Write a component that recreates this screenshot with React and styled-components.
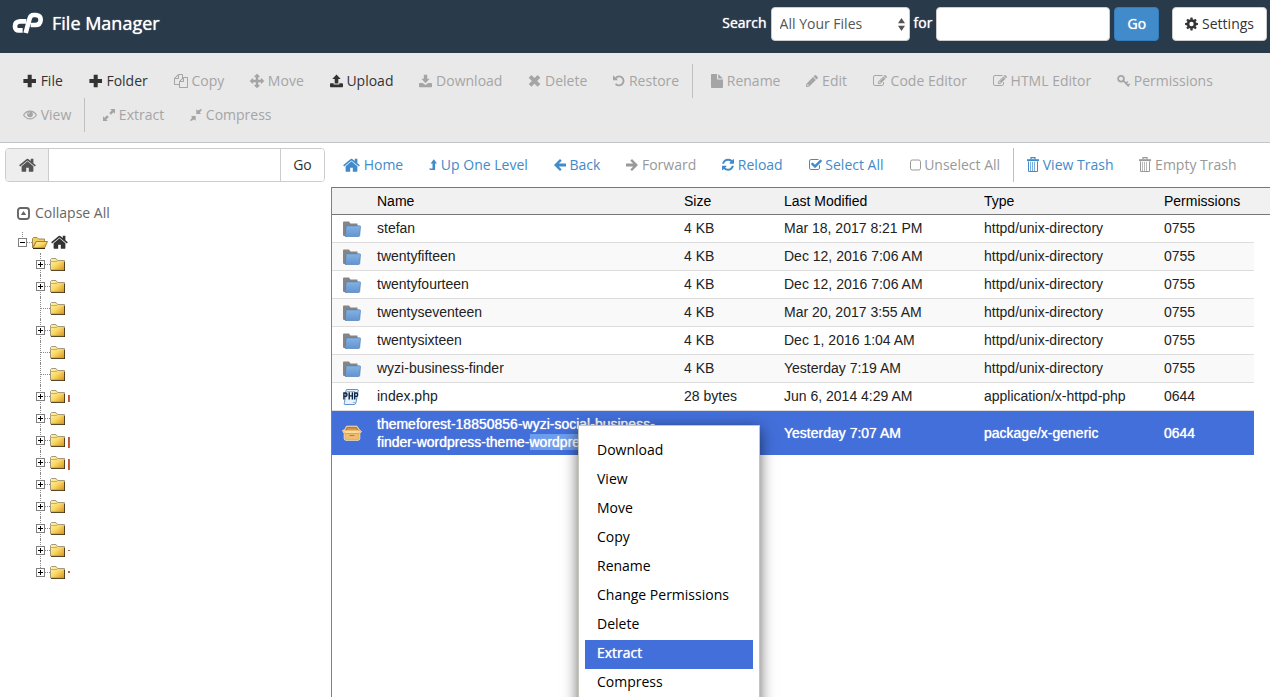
import React from "react";
import styled, { createGlobalStyle, css } from "styled-components";

const GlobalStyle = createGlobalStyle`
  *, *::before, *::after { box-sizing: border-box; }
  html, body { margin: 0; padding: 0; background: #fff; }
  body { font: 14px/20px "Open Sans", "Liberation Sans", sans-serif; color: #333; overflow: hidden; }
  button, input, select { font: inherit; color: inherit; margin: 0; }
`;

/* ---------- icons ---------- */

const Svg = styled.svg`
  display: block;
  flex: none;
  fill: currentColor;
  overflow: visible;
`;

const FA = "0 0 1792 1792";

const ICONS = {
  plus: { w: 14, h: 14, box: "0 0 14 14", art: <path d="M4.700.8h4v4.300h4.300v3.900H8.700v4.300h-4V9H.4V5.100h4.300z" /> },
  copy: { w: 14, h: 14, box: FA, art: <path d="M1696 384q40 0 68 28t28 68v1216q0 40-28 68t-68 28h-960q-40 0-68-28t-28-68v-288h-544q-40 0-68-28t-28-68v-672q0-40 20-88t48-76l408-408q28-28 76-48t88-20h416q40 0 68 28t28 68v328q68-40 128-40h416zm-544 213l-299 299h299v-299zm-640-384l-299 299h299v-299zm196 647l316-316v-416h-384v416q0 40-28 68t-68 28h-416v640h512v-256q0-40 20-88t48-76zm956 804v-1152h-384v416q0 40-28 68t-68 28h-416v640h896z" /> },
  move: { w: 14, h: 14, box: FA, art: <path d="M1792 896q0 26-19 45l-256 256q-19 19-45 19t-45-19-19-45v-128h-384v384h128q26 0 45 19t19 45-19 45l-256 256q-19 19-45 19t-45-19l-256-256q-19-19-19-45t19-45 45-19h128v-384h-384v128q0 26-19 45t-45 19-45-19l-256-256q-19-19-19-45t19-45l256-256q19-19 45-19t45 19 19 45v128h384v-384h-128q-26 0-45-19t-19-45 19-45l256-256q19-19 45-19t45 19l256 256q19 19 19 45t-19 45-45 19h-128v384h384v-128q0-26 19-45t45-19 45 19l256 256q19 19 19 45z" stroke="currentColor" strokeWidth="60" /> },
  upload: { w: 13, h: 14, box: "0 0 13 14", art: <path d="M6.500.6l4.200 4.500H8.300v4.300H4.700V5.100H2.300zM.8 9.300h2.900v1.300h5.600V9.300h2.900q.8 0 .8.8v2.400q0 .8-.8.8H.8q-.8 0-.8-.8v-2.400q0-.8.8-.8z" /> },
  download: { w: 13, h: 14, box: "0 0 13 14", art: <path d="M4.800.8h3.400v4h2.400L6.500 9.200 2.400 4.800h2.400zM.8 9.100h2.800l2.900 2 2.900-2h2.800q.8 0 .8.8v2.600q0 .8-.8.8H.8q-.8 0-.8-.8V9.900q0-.8.8-.8z" /> },
  times: { w: 13, h: 14, box: "0 0 13 14", art: <path d="M3.400 1l3.100 3.100L9.600 1l2.700 2.700-3.200 3.200 3.200 3.200-2.700 2.700-3.100-3.100-3.100 3.100L.7 10.100l3.200-3.200L.7 3.700z" /> },
  undo: { w: 12, h: 14, box: "0 0 12 14", art: (<><path d="M0 1.200v5h5L3.400 4.500z" /><path d="M2.500 4.300Q4.200 2.200 6.500 2.400A4.500 4.500 0 1 1 2.600 9.800" fill="none" stroke="currentColor" strokeWidth="1.900" /></>) },
  file: { w: 12, h: 14, box: "0 0 12 14", art: <path d="M.8 0H6v4.800q0 .8.8.8H12v7.600q0 .8-.8.8H.8q-.8 0-.8-.8V.8Q0 0 .8 0zM7.200 0.100L11.900 4.600H7.200z" /> },
  pencil: { w: 12, h: 14, box: "0 0 12 14", art: <path fillRule="evenodd" d="M8.800 1.300q.6-.5 1.200 0l1.700 1.700q.5.600 0 1.200l-1.200 1.200-2.900-2.900zM7 3.100L9.900 6 3 12.800l-3 .3.200-3.100zM1.300 10.500l-.1 1.300 1.300-.1.300-.6-.9-.9z" /> },
  edit: { w: 14, h: 14, box: FA, art: <path d="M888 1184l116-116-152-152-116 116v56h96v96h56zm440-720q-16-16-33 1l-350 350q-17 17-1 33t33-1l350-350q17-17 1-33zm80 594v190q0 119-84.500 203.500t-203.500 84.500h-832q-119 0-203.500-84.500t-84.500-203.500v-832q0-119 84.500-203.500t203.500-84.500h832q63 0 117 25 15 7 18 23 3 17-9 29l-49 49q-14 14-32 8-23-6-45-6h-832q-66 0-113 47t-47 113v832q0 66 47 113t113 47h832q66 0 113-47t47-113v-126q0-13 9-22l64-64q15-15 35-7t20 29zm-96-738l288 288-672 672h-288v-288zm444 132l-92 92-288-288 92-92q28-28 68-28t68 28l152 152q28 28 28 68t-28 68z" /> },
  key: { w: 13, h: 14, box: "0 0 13 14", art: <g fill="none" stroke="currentColor"><circle cx="4" cy="4.700" r="2.900" strokeWidth="1.800" /><path d="M5.800 6.200l6 6.100" strokeWidth="1.700" /><path d="M9 9.400l1.900-1.900M11 11.500l1.800-1.800" strokeWidth="1.400" /></g> },
  eye: { w: 14, h: 14, box: "0 0 14 14", art: (<><path d="M.6 7Q3 3.100 7 3.100T13.400 7Q11 10.900 7 10.900T.6 7z" fill="none" stroke="currentColor" strokeWidth="1.100" /><circle cx="7" cy="6.300" r="2.900" /><path d="M5.300 6.200Q5.400 4.700 7 4.600" fill="none" stroke="#e9e9e9" strokeWidth=".7" /></>) },
  expand: { w: 12, h: 14, box: "0 0 12 14", art: <path d="M7.200 1H12v4.800L10.500 4.300 8 6.800 6.200 5l2.500-2.500zM4.800 13H0V8.200l1.500 1.500L4 7.200 5.800 9l-2.500 2.500z" /> },
  compress: { w: 12, h: 14, box: "0 0 12 14", art: <path d="M11.200 1L12 1.800 9.700 4.400l1.400 1.500H6.300V1.200l1.500 1.400zM.8 13L0 12.200l2.300-2.600L.9 8.100h4.800v4.700l-1.500-1.400z" /> },
  home: { w: 17, h: 17, box: "64 90 1664 1664", art: <path d="M1472 992v480q0 26-19 45t-45 19h-384v-384h-256v384h-384q-26 0-45-19t-19-45v-480q0-1 .5-3t.5-3l575-474 575 474q1 2 1 6zm223-69l-62 74q-8 9-21 11h-3q-13 0-21-7l-692-577-692 577q-12 8-24 7-13-2-21-11l-62-74q-8-10-7-23.500t11-21.500l719-599q32-26 76-26t76 26l244 204v-195q0-14 9-23t23-9h192q14 0 23 9t9 23v408l219 182q10 8 11 21.500t-7 23.500z" /> },
  levelUp: { w: 8, h: 14, box: "0 0 8 14", art: <path d="M4.800 1.200L8 5.400H6.100v6.700H1.100L0 10.400h3.500v-5H1.600z" /> },
  left: { w: 12, h: 14, box: "0 0 12 14", art: <path d="M6 1l1.700 1.700-2.900 2.900H12v2.900H4.800l2.900 2.900L6 13 0 7z" /> },
  right: { w: 12, h: 14, box: "0 0 12 14", art: <path d="M6 1L4.300 2.700l2.900 2.900H0v2.900h7.200l-2.900 2.900L6 13l6-6z" /> },
  refresh: { w: 12, h: 14, box: "128 40 1536 1792", art: <path d="M1639 1056q0 5-1 7-64 268-268 434.500t-478 166.500q-146 0-282.500-55t-243.500-157l-129 129q-19 19-45 19t-45-19-19-45v-448q0-26 19-45t45-19h448q26 0 45 19t19 45-19 45l-137 137q71 66 161 102t187 36q134 0 250-65t186-179q11-17 53-117 8-23 30-23h192q13 0 22.500 9.500t9.500 22.500zm25-800v448q0 26-19 45t-45 19h-448q-26 0-45-19t-19-45 19-45l138-138q-148-137-349-137-134 0-250 65t-186 179q-11 17-53 117-8 23-30 23h-199q-13 0-22.500-9.500t-9.500-22.500v-7q65-268 270-434.500t480-166.500q146 0 284 55.500t245 156.500l130-129q19-19 45-19t45 19 19 45z" /> },
  check: { w: 13, h: 14, box: "64 0 1664 1792", art: <path d="M1472 930v318q0 119-84.500 203.500t-203.500 84.500h-832q-119 0-203.500-84.500t-84.500-203.500v-832q0-119 84.500-203.500t203.500-84.500h832q63 0 117 25 15 7 18 23 3 17-9 29l-49 49q-10 10-23 10-3 0-9-2-23-6-45-6h-832q-66 0-113 47t-47 113v832q0 66 47 113t113 47h832q66 0 113-47t47-113v-254q0-13 9-22l64-64q10-10 23-10 6 0 12 3 20 8 20 29zm231-489l-814 814q-24 24-57 24t-57-24l-430-430q-24-24-24-57t24-57l110-110q24-24 57-24t57 24l263 263 647-647q24-24 57-24t57 24l110 110q24 24 24 57t-24 57z" /> },
  square: { w: 11, h: 14, box: "0 0 11 14", art: <rect x=".5" y="2" width="10" height="10" rx="1.800" fill="none" stroke="currentColor" /> },
  trash: { w: 12, h: 16, box: "0 0 12 16", art: (<><path d="M4 2.400V.6h4v1.800" fill="none" stroke="currentColor" strokeWidth="1.200" /><path d="M0 2.200h12v1.900H0z" /><path d="M1.500 4.500V14.500h9V4.500" fill="none" stroke="currentColor" /><path d="M3.500 5v9M5.500 5v9M7.500 5v9" fill="none" stroke="currentColor" strokeWidth=".7" /></>) },
  cog: { w: 13, h: 14, box: "-7 -7 14 14", art: (<><circle r="3.700" fill="none" stroke="currentColor" strokeWidth="2.700" />{[0, 45, 90, 135, 180, 225, 270, 315].map((a) => (<path key={a} d="M-1.600-4.500L-1-6.900h2l.6 2.400z" transform={`rotate(${a})`} />))}</>) },
  collapse: { w: 13, h: 13, box: "0 0 13 13", art: (<><rect x="1" y="1" width="11" height="11" rx="2.500" fill="none" stroke="currentColor" strokeWidth="1.900" /><path d="M6.500 4l2.700 4H3.800z" /></>) },
};

const Icon = ({ name }) => {
  const { w, h, box, art } = ICONS[name];
  return (
    <Svg width={w} height={h} viewBox={box} aria-hidden="true">
      {art}
    </Svg>
  );
};

const Logo = () => (
  <Svg width="32" height="22" viewBox="36 34 96 66" role="img" aria-label="cPanel">
    <g fill="none" stroke="#fff" strokeWidth="14">
      <path d="M79 62H60Q45 63 45 76.500T58 89H68" />
      <path d="M77 97L89 53Q92 43 101 43H108Q122 44 122 57.500Q121 73 106 73H92" />
    </g>
  </Svg>
);

const UpDown = styled(({ className }) => (
  <svg className={className} width="7" height="13" viewBox="0 0 7 13" aria-hidden="true">
    <path d="M3.500 0L7 5.200H0zM3.500 13L0 7.800h7z" fill="#555" />
  </svg>
))`
  position: absolute;
  right: 5px;
  top: 11px;
  pointer-events: none;
`;

const YellowFolder = () => (
  <Svg width="15" height="13" viewBox="0 0 15 13" aria-hidden="true">
    <defs>
      <linearGradient id="gold" x1="0" y1="0" x2="1" y2="1">
        <stop offset="0" stopColor="#fff6b0" />
        <stop offset=".5" stopColor="#f9d765" />
        <stop offset="1" stopColor="#d8931c" />
      </linearGradient>
    </defs>
    <path d="M.5 12V1.500L1.500.5H6L7.500 2.500H14.500V12z" fill="url(#gold)" stroke="#a59a80" />
    <path d="M1 12.500h14M14.500 4v9" stroke="#3c2a08" strokeWidth=".8" />
    <path d="M.5 3.500H7" stroke="#c9b25e" />
  </Svg>
);

const OpenFolder = () => (
  <Svg width="16" height="12" viewBox="0 0 16 12" aria-hidden="true">
    <path d="M.5 11V1.500L1.500.5H5L6.500 2H12.500V4.500H4z" fill="#f6cf58" stroke="#a08a55" />
    <path d="M1 11L4.300 4.500H15.500L12.500 11z" fill="url(#gold)" stroke="#a08040" />
    <path d="M1 11.500h12" stroke="#3c2a08" />
  </Svg>
);

const BlueFolder = () => (
  <Svg width="18" height="16" viewBox="0 0 18 16" aria-hidden="true">
    <defs>
      <linearGradient id="sky" x1="0" y1="0" x2="0" y2="1">
        <stop offset="0" stopColor="#86b2e2" />
        <stop offset="1" stopColor="#6294d0" />
      </linearGradient>
    </defs>
    <path d="M0 14V1.500Q0 .5 1 .5H6L7.500 2.500H14.500V6H4L2.500 15H1Q0 15 0 14z" fill="#858585" />
    <path d="M3 5.500Q3.200 4.800 4 4.800H16.800Q17.600 4.800 17.500 5.600L16.700 14.500Q16.600 15.500 15.600 15.500H2.200z" fill="url(#sky)" stroke="#4373b0" strokeWidth=".6" />
  </Svg>
);

const PhpFile = () => (
  <Svg width="16" height="16" viewBox="0 0 16 16" aria-hidden="true">
    <path d="M3 1.500Q3 .5 4 .5H14.500Q16 .6 15 2.500L13 13.500Q12.700 15.500 11 15.500H2Q.3 15.300 1.500 13.500z" fill="#e6f1fb" stroke="#5c91c9" />
    <path d="M4 2.500h8M10 13.500h2.500" stroke="#8fb9e0" />
    <g fill="none" stroke="#0b2345" strokeWidth="1.400">
      <path d="M.9 10.500V4h1.700q1.400 0 1.400 1.700T2.600 7.400H1M6.200 3.300v7.200M9.400 3.300v7.200M6.200 6.900h3.200M11.700 10.500V4h1.600q1.400 0 1.400 1.700t-1.400 1.700h-1.500" />
    </g>
  </Svg>
);

const PackageFile = () => (
  <Svg width="20" height="16" viewBox="0 0 20 16" aria-hidden="true">
    <path d="M4.500 1.200H15L17 4.500 19.500 6.500 17.800 8.500V13.500Q17.700 15.300 16 15.300H4Q2.300 15.300 2.200 13.500V8.500L.5 5.500 2.600 4.800z" fill="#e3a24c" stroke="#fae6c2" strokeWidth=".9" />
    <path d="M5 2H14.500l1.800 3.200H3.300z" fill="#b87a2c" />
    <path d="M5.500 3.200H14L15 5H4.700z" fill="#d59a4a" />
    <path d="M1.500 5.500H16L18.500 6.700 17 8H3z" fill="#fbdca0" />
    <path d="M3.300 9H16.700V13.300Q16.500 14.300 15.500 14.300H4.500Q3.500 14.300 3.300 13.300z" fill="#f0bd6c" />
    <path d="M7.500 10.500h5" stroke="#b87a2c" />
  </Svg>
);

/* ---------- shared controls ---------- */

const smoothed = css`
  text-shadow: 0 0 1px currentColor;
`;

const Shell = styled.div`
  display: flex;
  flex-direction: column;
  height: 100vh;
  overflow: hidden;
`;

const Header = styled.header`
  display: flex;
  justify-content: space-between;
  align-items: flex-start;
  flex: none;
  height: 53px;
  padding: 7px 3px 0 12px;
  background: #293a4a;
  color: #fff;
`;

const Brand = styled.h1`
  display: flex;
  align-items: center;
  gap: 8px;
  height: 32px;
  margin: 0;
  font-size: 18px;
  font-weight: 400;
  ${smoothed}
`;

const SearchForm = styled.form`
  display: flex;
  gap: 4px;
`;

const Label = styled.label`
  line-height: 32px;
  ${smoothed}
`;

const SelectBox = styled.div`
  position: relative;
  width: 139px;
`;

const field = css`
  height: 34px;
  border: 1px solid #ccc;
  border-radius: 4px;
  background: #fff;
  color: #555;
  outline: none;
`;

const Select = styled.select`
  ${field}
  appearance: none;
  width: 100%;
  padding: 0 8px;
`;

const SearchInput = styled.input`
  ${field}
  width: 174px;
  padding: 0 12px;
`;

const Button = styled.button`
  display: flex;
  align-items: center;
  justify-content: center;
  gap: 4px;
  height: 34px;
  padding: 0 12px;
  border: 1px solid ${(p) => (p.$primary ? "#357ebd" : "#ccc")};
  border-radius: 4px;
  background: ${(p) => (p.$primary ? "#428bca" : "#fff")};
  color: ${(p) => (p.$primary ? "#fff" : "#333")};
  ${(p) => p.$primary && smoothed}
`;

const SettingsButton = styled(Button)`
  margin-left: 9px;
`;

const Bar = styled.div`
  display: flex;
  flex-wrap: wrap;
`;

const Divider = styled.span`
  width: 1px;
  height: 34px;
  background: #bfbfbf;
`;

const Toolbar = styled(Bar)`
  flex: none;
  padding: 11px 10px 10px;
  background: #e9e9e9;
  border-bottom: 1px solid #c3c6c8;
  ${Divider} {
    margin-right: 5px;
  }
`;

const NavBar = styled(Bar)`
  padding-bottom: 5px;
`;

const Tool = styled.button`
  display: flex;
  align-items: center;
  height: 34px;
  padding: 0 13px;
  border: 0;
  background: none;
  white-space: pre;
  color: ${(p) => (p.$link ? "#428bca" : "#333")};
  &:disabled {
    color: ${(p) => (p.$link ? "#999" : "#a5a5a5")};
  }
`;

/* ---------- side panel ---------- */

const Main = styled.main`
  display: flex;
  flex: 1;
  min-height: 0;
  padding-top: 5px;
`;

const Side = styled.aside`
  flex: none;
  width: 330px;
  padding: 0 5px;
`;

const PathForm = styled.form`
  display: flex;
  height: 34px;
  border: 1px solid #ccc;
  border-radius: 4px;
  overflow: hidden;
`;

const PathHome = styled.label`
  display: flex;
  align-items: center;
  justify-content: center;
  width: 43px;
  background: #eee;
  border-right: 1px solid #ccc;
  color: #555;
`;

const PathInput = styled.input`
  flex: 1;
  min-width: 0;
  padding: 0 12px;
  border: 0;
  outline: none;
`;

const PathGo = styled.button`
  width: 44px;
  border: 0;
  border-left: 1px solid #ccc;
  background: #fff;
`;

const Collapse = styled.button`
  display: flex;
  align-items: center;
  gap: 5px;
  margin: 21px 0 9px 12px;
  padding: 0;
  border: 0;
  background: none;
  color: #666;
`;

const Tree = styled.ul`
  list-style: none;
  margin: 0;
  padding: 0 0 0 ${(p) => (p.$root ? 13 : 18)}px;
`;

const Node = styled.li`
  position: relative;
  &::before {
    content: "";
    position: absolute;
    left: 4px;
    top: 0;
    height: ${(p) => (p.$end ? 11 : 22)}px;
    border-left: 1px dotted #888;
  }
`;

const NodeRow = styled.div`
  display: flex;
  align-items: center;
  height: ${(p) => (p.$root ? 21 : 22)}px;
  color: #333;
`;

const Toggle = styled.button`
  position: relative;
  width: 9px;
  height: 9px;
  padding: 0;
  border: 1px solid #808080;
  background: #fff;
  &::before,
  &::after {
    content: "";
    position: absolute;
    left: 1px;
    top: 3px;
    width: 5px;
    height: 1px;
    background: #000;
  }
  &::after {
    display: ${(p) => (p.$open ? "none" : "block")};
    left: 3px;
    top: 1px;
    width: 1px;
    height: 5px;
  }
`;

const Lead = styled.span`
  width: ${(p) => (p.$long ? 10 : 5)}px;
  margin-left: ${(p) => (p.$long ? 4 : 0)}px;
  border-top: 1px dotted #888;
`;

const HomeMark = styled.span`
  margin-left: 3px;
`;

const Sliver = styled.span`
  width: 2px;
  height: ${(p) => p.$h}px;
  margin: ${(p) => (p.$high ? 0 : 5)}px 0 0 3px;
  background: linear-gradient(90deg, #c0562f 50%, #5c86a8 50%);
`;

/* ---------- file table ---------- */

const Files = styled.section`
  display: flex;
  flex-direction: column;
  flex: 1;
  min-width: 0;
`;

const ListPane = styled.div`
  flex: 1;
  margin-left: 1px;
  border-left: 1px solid #808080;
`;

const Table = styled.table`
  width: 100%;
  table-layout: fixed;
  border-spacing: 0;
  font: 14px/18px "Liberation Sans", sans-serif;
`;

const Th = styled.th`
  width: ${(p) => (p.$w ? p.$w + "px" : "auto")};
  height: 28px;
  padding: 0 5px;
  border: solid #777;
  border-width: 1px 0;
  background: #f1f1f1;
  color: #000;
  font-weight: 400;
  text-align: left;
`;

const Td = styled.td`
  padding: 4px 5px 5px;
  border-bottom: 1px solid #ddd;
  white-space: nowrap;
`;

const IconTd = styled(Td)`
  padding: 0 0 0 ${(p) => (p.$wide ? 10 : 11)}px;
`;

const Row = styled.tr`
  color: #222;
  &:nth-child(even) > ${Td} {
    background: #f9f9f9;
  }
  ${(p) =>
    p.$selected &&
    css`
      color: #fff;
      &&& > ${Td} {
        padding-top: 4px;
        padding-bottom: 4px;
        background: #426fd9;
        border: 0;
        ${smoothed}
      }
    `}
`;

const NameTd = styled(Td)`
  position: relative;
`;

const Picked = styled.span`
  background: #6d9eee;
`;

/* ---------- context menu ---------- */

const Menu = styled.ul`
  position: absolute;
  z-index: 2;
  left: 206px;
  top: 14px;
  width: 182px;
  margin: 0;
  padding: 11px 6px;
  list-style: none;
  background: #fff;
  border: 1px solid #c5c5b8;
  box-shadow: 0 4px 14px rgba(0, 0, 0, 0.6);
  text-shadow: none;
  font: 14px/20px "Open Sans", sans-serif;
`;

const MenuItem = styled.button`
  display: block;
  width: 100%;
  height: 29px;
  padding: 0 12px 4px;
  border: 0;
  text-align: left;
  background: ${(p) => (p.$active ? "#426fd9" : "#fff")};
  color: ${(p) => (p.$active ? "#fff" : "#000")};
  ${(p) => p.$active && smoothed}
`;

/* ---------- data ---------- */

const TOOLS = [
  ["plus", "File", true],
  ["plus", "Folder", true],
  ["copy", "Copy"],
  ["move", "Move"],
  ["upload", "Upload", true],
  ["download", "Download"],
  ["times", "Delete"],
  ["undo", "Restore"],
  null,
  ["file", "Rename"],
  ["pencil", "Edit"],
  ["edit", "Code Editor"],
  ["edit", "HTML Editor"],
  ["key", "Permissions"],
  ["eye", "View"],
  null,
  ["expand", "Extract"],
  ["compress", "Compress"],
];

const NAV = [
  ["home", "Home", true],
  ["levelUp", "Up One Level", true],
  ["left", "Back", true],
  ["right", "Forward"],
  ["refresh", "Reload", true],
  ["check", "Select All", true],
  ["square", "Unselect All"],
  null,
  ["trash", "View Trash", true],
  ["trash", "Empty Trash"],
];

const DIR = "httpd/unix-directory";
const ROWS = [
  ["stefan", "4 KB", "Mar 18, 2017 8:21 PM", DIR, "0755"],
  ["twentyfifteen", "4 KB", "Dec 12, 2016 7:06 AM", DIR, "0755"],
  ["twentyfourteen", "4 KB", "Dec 12, 2016 7:06 AM", DIR, "0755"],
  ["twentyseventeen", "4 KB", "Mar 20, 2017 3:55 AM", DIR, "0755"],
  ["twentysixteen", "4 KB", "Dec 1, 2016 1:04 AM", DIR, "0755"],
  ["wyzi-business-finder", "4 KB", "Yesterday 7:19 AM", DIR, "0755"],
  ["index.php", "28 bytes", "Jun 6, 2014 4:29 AM", "application/x-httpd-php", "0644"],
];

const NODES = [
  { open: true },
  { open: true },
  {},
  { open: true },
  {},
  {},
  { open: true, h: 7 },
  { open: true },
  { open: true, h: 11 },
  { open: true, h: 11 },
  { open: true },
  { open: true },
  { open: true },
  { open: true, h: 1 },
  { open: true, h: 2 },
];

const MENU = ["Download", "View", "Move", "Copy", "Rename", "Change Permissions", "Delete", "Extract", "Compress"];

const Tools = ({ items, link }) =>
  items.map((t, i) =>
    t ? (
      <Tool key={i} type="button" $link={link} disabled={!t[2]}>
        <Icon name={t[0]} />
        <span>{" " + t[1]}</span>
      </Tool>
    ) : (
      <Divider key={i} />
    )
  );

const stop = (e) => e.preventDefault();

export default function App() {
  return (
    <Shell>
      <GlobalStyle />
      <Header>
        <Brand>
          <Logo />
          File Manager
        </Brand>
        <SearchForm onSubmit={stop}>
          <Label htmlFor="scope">Search</Label>
          <SelectBox>
            <Select id="scope">
              <option>All Your Files</option>
            </Select>
            <UpDown />
          </SelectBox>
          <Label htmlFor="query">for</Label>
          <SearchInput id="query" type="text" />
          <Button $primary type="submit">Go</Button>
          <SettingsButton type="button">
            <Icon name="cog" />
            Settings
          </SettingsButton>
        </SearchForm>
      </Header>

      <Toolbar role="toolbar" aria-label="File actions">
        <Tools items={TOOLS} />
      </Toolbar>

      <Main>
        <Side>
          <PathForm onSubmit={stop}>
            <PathHome htmlFor="path" aria-label="Path">
              <Icon name="home" />
            </PathHome>
            <PathInput id="path" type="text" />
            <PathGo type="submit">Go</PathGo>
          </PathForm>
          <Collapse type="button">
            <Icon name="collapse" />
            Collapse All
          </Collapse>
          <Tree $root>
            <Node $end>
              <NodeRow $root>
                <Toggle type="button" $open aria-label="Collapse home" />
                <Lead />
                <OpenFolder />
                <HomeMark>
                  <Icon name="home" />
                </HomeMark>
              </NodeRow>
              <Tree>
                {NODES.map((n, i) => (
                  <Node key={i} $end={i === NODES.length - 1}>
                    <NodeRow>
                      {n.open && <Toggle type="button" aria-label="Expand folder" />}
                      <Lead $long={!n.open} />
                      <YellowFolder />
                      {n.h && <Sliver $h={n.h} $high={n.h < 4} />}
                    </NodeRow>
                  </Node>
                ))}
              </Tree>
            </Node>
          </Tree>
        </Side>

        <Files>
          <NavBar role="toolbar" aria-label="Navigation">
            <Tools items={NAV} link />
          </NavBar>
          <ListPane>
            <Table>
              <thead>
                <tr>
                  <Th $w={40} />
                  <Th>Name</Th>
                  <Th $w={100}>Size</Th>
                  <Th $w={200}>Last Modified</Th>
                  <Th $w={180}>Type</Th>
                  <Th $w={95}>Permissions</Th>
                  <Th $w={16} />
                </tr>
              </thead>
              <tbody>
                {ROWS.map((r) => (
                  <Row key={r[0]}>
                    <IconTd>{r[3] === DIR ? <BlueFolder /> : <PhpFile />}</IconTd>
                    {r.map((c, i) => (
                      <Td key={i}>{c}</Td>
                    ))}
                  </Row>
                ))}
                <Row $selected>
                  <IconTd $wide>
                    <PackageFile />
                  </IconTd>
                  <NameTd>
                    themeforest-18850856-wyzi-social-business-
                    <br />
                    finder-wordpress-theme-<Picked>wordpress</Picked>
                    <Menu>
                      {MENU.map((m) => (
                        <li key={m}>
                          <MenuItem type="button" $active={m === "Extract"}>
                            {m}
                          </MenuItem>
                        </li>
                      ))}
                    </Menu>
                  </NameTd>
                  <Td />
                  <Td>Yesterday 7:07 AM</Td>
                  <Td>package/x-generic</Td>
                  <Td>0644</Td>
                </Row>
              </tbody>
            </Table>
          </ListPane>
        </Files>
      </Main>
    </Shell>
  );
}
